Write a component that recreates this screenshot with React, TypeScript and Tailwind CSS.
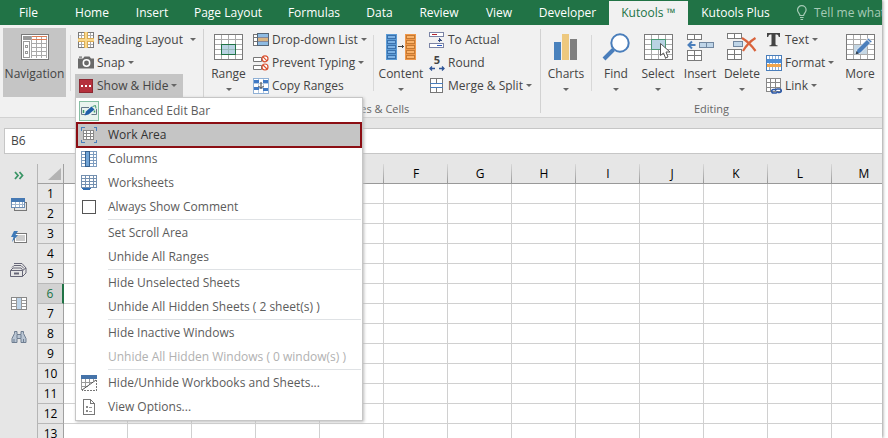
import type { ReactNode } from "react";

const G = "#7a7a7a";
const B = "#4a7ebb";

function Svg({ w, h, children, smooth }: { w: number; h: number; children: ReactNode; smooth?: boolean }) {
  return (
    <svg
      width={w}
      height={h}
      viewBox={`0 0 ${w} ${h}`}
      fill="none"
      shapeRendering={smooth ? "auto" : "crispEdges"}
      className="block shrink-0"
      aria-hidden="true"
    >
      {children}
    </svg>
  );
}

function Arrow() {
  return (
    <svg width="6" height="3" viewBox="0 0 6 3" className="block shrink-0" aria-hidden="true">
      <path d="M0 0h6L3 3z" fill="#666" />
    </svg>
  );
}

/* ---------- large ribbon icons ---------- */

const NavigationIcon = () => (
  <Svg w={28} h={26}>
    <rect x=".5" y=".5" width="27" height="25" fill="#fff" stroke={G} />
    <rect x="2" y="2" width="8" height="4" fill="#999" />
    <path d="M11 9.500h15M11 13.500h15M11 17.500h15M11 21.500h15M10.500 2v22M15.500 2v22M20.500 2v22M25.500 2v22" stroke="#aaa" />
    <path d="M11 2.500h15M11 5.500h15" stroke="#e07b53" />
    <path d="M2.500 7.500h6v16h-6zM4.500 11.500h2v2h-2zM4.500 17.500h2v2h-2z" stroke="#999" />
  </Svg>
);

const SheetBase = () => (
  <>
    <rect x=".5" y=".5" width="28" height="25" fill="#fff" stroke={G} />
    <path d="M1 5.500h27M1 10.500h27M1 15.500h27M1 20.500h27M7.500 1v24M14.500 1v24M21.500 1v24" stroke="#aaa" />
  </>
);

const RangeIcon = () => (
  <Svg w={29} h={26}>
    <SheetBase />
    <rect x="7.500" y="10.500" width="14" height="10" fill="#b9d3e3" stroke="#217346" />
    <path d="M14.500 11v9M8 15.500h13" stroke="#9bb" />
  </Svg>
);

const ContentIcon = () => (
  <Svg w={30} h={26}>
    <rect x="0" y="0" width="11" height="26" fill="#5b9bd5" />
    <rect x="19" y="0" width="11" height="26" fill="#f0984a" />
    {[1, 6, 11, 16, 21].map((y) => (
      <g key={y}>
        <rect x="1.500" y={y + 0.5} width="8" height="3" fill="#7db3e5" stroke="#3a71ad" />
        <rect x="20.500" y={y + 0.5} width="8" height="3" fill="#fbb36a" stroke="#c57a33" />
      </g>
    ))}
    <path d="M12 12.500h6M16.500 11v3" stroke="#444" />
  </Svg>
);

const ChartsIcon = () => (
  <Svg w={24} h={26}>
    <rect x="0" y="8" width="7" height="18" fill="#4a82bd" />
    <rect x="8" y="0" width="7" height="26" fill="#edc87e" />
    <rect x="16" y="5" width="7" height="21" fill="#7f7f7f" />
  </Svg>
);

const FindIcon = () => (
  <Svg w={28} h={28} smooth>
    <path d="M11.500 16.500L2 26" stroke={B} strokeWidth="4" />
    <circle cx="18" cy="10" r="8.700" fill="#fff" stroke={B} strokeWidth="2" />
  </Svg>
);

const SelectIcon = () => (
  <Svg w={29} h={26}>
    <SheetBase />
    <rect x="7.500" y="5.500" width="14" height="10" fill="#b9d3e3" stroke="#4c9a76" />
    <path d="M16.500 9.500v12l3-2.500 2 5 2.500-1-2-5h4z" fill="#fff" stroke="#555" shapeRendering="auto" />
  </Svg>
);

const InsertIcon = () => (
  <Svg w={27} h={27}>
    <path d="M.5.5h14v5H.5zM7.500.5v5M.5 16.500h14v10H.5zM7.500 16.500v10M.5 21.500h14" fill="#fff" stroke={G} />
    <path d="M12.500 8.500h14v5h-14zM19.500 8.500v5" fill="#bfd5e8" stroke="#7187a0" />
    <path d="M1.500 11h7M5 7.500L1.500 11 5 14.500" stroke={B} strokeWidth="2" shapeRendering="auto" />
  </Svg>
);

const DeleteIcon = () => (
  <Svg w={30} h={28}>
    <path d="M.5.5h14v5H.5zM7.500.5v5M.5 16.500h14v10H.5zM7.500 16.500v10M.5 21.500h14" fill="#fff" stroke={G} />
    <path d="M6.500 8.500h9v5h-9z" fill="#bfd5e8" stroke="#7187a0" />
    <path
      d="M15 5c5 3 10 8 13.500 13M28.500 5c-5 3-9 7-12.500 13"
      stroke="#d9633c"
      strokeWidth="2.200"
      shapeRendering="auto"
    />
  </Svg>
);

const MoreIcon = () => (
  <Svg w={29} h={26}>
    <SheetBase />
    <rect x="8" y="11" width="13" height="9" fill="#c5d7e4" />
    <g shapeRendering="auto">
      <path d="M9.500 20.500l1.500-5L22.500 4l3.500 3.500L14.500 19z" fill={B} stroke="#fff" strokeWidth=".7" />
      <path d="M9.500 20.500l1-3.500 2.500 2.500z" fill="#345" />
      <path d="M21 5.500L24.500 9" stroke="#fff" />
    </g>
  </Svg>
);

/* ---------- small ribbon icons ---------- */

const ReadingIcon = () => (
  <Svg w={16} h={16}>
    <rect x=".5" y=".5" width="15" height="15" fill="#fff" stroke={G} />
    <path d="M1 3.500h14M1 12.500h14M3.500 1v14M12.500 1v14" stroke="#aaa" />
    <path d="M6 0h4v6h6v4h-6v6H6v-6H0V6h6z" fill="#f9d88c" />
    <path d="M6.500 0v6.500H0M9.500 0v6.500H16M6.500 16V9.500H0M9.500 16V9.500H16" stroke="#d9ab55" />
  </Svg>
);

const CameraIcon = () => (
  <Svg w={16} h={13} smooth>
    <path d="M0 2.500h5L6.500.5h5L13 2.500h3v10H0z" fill="#6a6a6a" />
    <circle cx="8.500" cy="7" r="3.200" fill="#6a6a6a" stroke="#fff" strokeWidth="1.500" />
    <path d="M1 .5h3v1.200H1z" fill="#6a6a6a" />
  </Svg>
);

const HideIcon = () => (
  <Svg w={16} h={14}>
    <rect x="1.500" y=".5" width="13" height="13" fill="#b5303c" stroke="#8d2731" />
    <path d="M3 6h2v2H3zM7 6h2v2H7zM11 6h2v2h-2z" fill="#fff" />
  </Svg>
);

const DropListIcon = () => (
  <Svg w={16} h={14}>
    <path d="M.5 1.500h4v11h-4zM1 4.500h3M1 8.500h3" fill="#fff" stroke="#777" />
    <rect x="4.500" y=".5" width="11" height="12" fill="#8dbbe3" stroke="#567" />
    <rect x="5" y="4" width="10" height="5" fill="#d8b583" />
    <path d="M5 4.500h10M5 8.500h10" stroke="#889" />
  </Svg>
);

const PreventIcon = () => (
  <Svg w={16} h={16} smooth>
    <path d="M.5 2.500h8v4h-8zM.5 10.500h8v4h-8z" fill="#fff" stroke="#777" />
    <circle cx="12" cy="3.800" r="3" fill="#fff" stroke="#d9502f" strokeWidth="1.200" />
    <circle cx="12" cy="12" r="3" fill="#fff" stroke="#d9502f" strokeWidth="1.200" />
    <path d="M10 1.800l4 4M10 10l4 4" stroke="#d9502f" strokeWidth="1.200" />
  </Svg>
);

const CopyRangesIcon = () => (
  <Svg w={16} h={16}>
    <rect x=".5" y=".5" width="15" height="15" fill="#fff" stroke="#8fb0d5" />
    <path d="M1 5.500h14M1 10.500h14M5.500 1v14M10.500 1v14" stroke="#b5c9e0" />
    <path d="M1 2h5v3H1zM10 2h5v3h-5zM1 9h5v3H1zM10 10h5v3h-5z" fill="#3f79c4" />
    <path d="M8 4v6M5.500 8L8 10.500 10.500 8" stroke="#333" shapeRendering="auto" />
  </Svg>
);

const ActualIcon = () => (
  <Svg w={16} h={16}>
    <rect x=".5" y=".5" width="14" height="4" fill="#fff" stroke="#7a83a5" />
    <path d="M3 2.500h5" stroke="#b3262f" />
    <rect x=".5" y="11.500" width="14" height="4" fill="#fff" stroke="#7a83a5" />
    <path d="M8 13.500h5" stroke="#2b58c0" />
    <path d="M10.500 6v4M8.500 8.500h4M9.500 7.500h2" stroke="#334a80" />
  </Svg>
);

const RoundIcon = () => (
  <span className="flex h-[17px] w-4 shrink-0 flex-col items-center justify-between" aria-hidden="true">
    <span className="text-[11px] leading-[11px] font-bold">5</span>
    <Svg w={16} h={5} smooth>
      <path d="M1 2.500h5M3 .5L1 2.500l2 2M10 2.500h5M13 .5l2 2-2 2" stroke="#2e5597" strokeWidth="1.300" />
    </Svg>
  </span>
);

const MergeIcon = () => (
  <Svg w={16} h={15}>
    <rect x="1.500" y=".5" width="12" height="14" fill="#fff" stroke="#777" />
    <path d="M7.500 1v4M7.500 10v4" stroke="#777" />
    <path d="M1 5.500h13M1 9.500h13" stroke={B} />
  </Svg>
);

const TextIcon = () => (
  <Svg w={16} h={15} smooth>
    <path
      d="M1 1h13v4h-1.200c-.4-2-1-2.500-3.300-2.500V12c0 1 .5 1.200 2 1.200V14.200H3.500V13.200c1.500 0 2-.2 2-1.200V2.500C3.200 2.500 2.600 3 2.200 5H1z"
      fill="#444"
    />
  </Svg>
);

const FormatIcon = () => (
  <Svg w={16} h={16}>
    <rect x=".5" y=".5" width="15" height="15" fill="#fff" stroke="#4a7ebb" />
    <path d="M3.500 1v14M6.500 1v14M9.500 1v14M12.500 1v14" stroke="#8fb0d5" />
    <rect x="1" y="4" width="14" height="4" fill="#4f8fd6" />
    <rect x="1" y="9" width="14" height="3" fill="#f2a64c" />
  </Svg>
);

const LinkIcon = () => (
  <Svg w={16} h={16}>
    <path d="M.5.5h14v13H.5zM.5 4.500h14M.5 9.500h14M4.500.5v13M9.500.5v13" fill="#fff" stroke="#888" />
    <g shapeRendering="auto" strokeWidth="1.500" stroke="#2b58a8" fill="none">
      <path d="M9 11.500H7.500a1.800 1.800 0 0 0 0 3.600H10a1.800 1.800 0 0 0 1.500-1.800" />
      <path d="M12 14.500h1.500a1.800 1.800 0 0 0 0-3.600H11a1.800 1.800 0 0 0-1.500 1.800" />
    </g>
  </Svg>
);

/* ---------- ribbon parts ---------- */

function BigButton({ icon, label, className, arrow = true }: { icon: ReactNode; label: string; className: string; arrow?: boolean }) {
  return (
    <button type="button" className={`flex h-[69px] shrink-0 flex-col items-center gap-1.5 pt-1.5 ${className}`}>
      <span className="flex h-[26px] items-center">{icon}</span>
      <span className="h-4 leading-4 whitespace-nowrap">{label}</span>
      {arrow && <Arrow />}
    </button>
  );
}

function SmallButton({ icon, label, arrow, wide, active }: { icon: ReactNode; label: string; arrow?: boolean; wide?: boolean; active?: boolean }) {
  return (
    <button
      type="button"
      className={`flex h-[23px] items-center gap-[3px] self-start px-[3px] whitespace-nowrap ${active ? "bg-[#c5c5c5] pr-1.5" : ""}`}
    >
      {icon}
      <span className={wide ? "pr-1" : ""}>{label}</span>
      {arrow && <Arrow />}
    </button>
  );
}

const ShortRule = () => <span className="mt-[7px] h-14 w-px shrink-0 bg-[#d8d8d8]" />;
const LongRule = () => <span className="mt-1 h-[84px] w-px shrink-0 bg-[#d2d2d2]" />;

function Group({ label, className, children }: { label?: string; className: string; children: ReactNode }) {
  return (
    <section className={`flex shrink-0 flex-col pt-[3px] ${className}`}>
      <div className="flex">{children}</div>
      {label && <p className="pt-1 text-center text-[11px] leading-4 text-[#666]">{label}</p>}
    </section>
  );
}

const tabs = [
  ["File", "w-[61px] pr-1"],
  ["Home", "w-[62px]"],
  ["Insert", "w-[58px]"],
  ["Page Layout", "w-[94px]"],
  ["Formulas", "w-[78px]"],
  ["Data", "w-[53px]"],
  ["Review", "w-[66px]"],
  ["View", "w-[54px]"],
  ["Developer", "w-[83px]"],
  ["Kutools ™", "w-[79px] mt-px bg-[#f1f1f1] text-[#217346]"],
  ["Kutools Plus", "w-[95px]"],
];

/* ---------- menu ---------- */

const EditBarIcon = () => (
  <Svg w={20} h={20} smooth>
    <rect x=".5" y=".5" width="19" height="19" fill="#e9f3ee" stroke="#86bfa3" />
    <path d="M10 6.500H2.500v7h4M17.500 8v5.500h-5" stroke="#678" />
    <path d="M4.500 9v3M15.500 9.500v2" stroke="#3d9a6c" strokeWidth="1.500" />
    <path d="M5.500 14.500l1.500-4 5.500-5 3 3-6 5z" fill="#1f5fa8" />
    <path d="M13.500 5.500l3-1 .5 3" stroke="#3d9a6c" />
  </Svg>
);

const WorkAreaIcon = () => (
  <Svg w={16} h={16}>
    <path d="M3.500.5h-3v3M12.500.5h3v3M3.500 15.500h-3v-3M12.500 15.500h3v-3" stroke={B} />
    <path d="M2.500 3.500h10v9h-10zM2.500 6.500h10M2.500 9.500h10M5.500 3.500v9M9.500 3.500v9" fill="#fff" stroke="#888" />
  </Svg>
);

const ColumnsIcon = () => (
  <Svg w={16} h={16}>
    <path d="M.5.5h15v15H.5zM.5 3.500h15M.5 6.500h15M.5 9.500h15M.5 12.500h15M12.500.5v15" fill="#fff" stroke="#7d9cbf" />
    <rect x="4.500" y=".5" width="4" height="15" fill="#6fa3d6" stroke="#37618f" />
  </Svg>
);

const WorksheetsIcon = () => (
  <Svg w={16} h={16}>
    <path d="M.5.5h15v12H.5zM.5 3.500h15M.5 6.500h15M.5 9.500h15M4.500.5v12M8.500.5v12M12.500.5v12" fill="#fff" stroke="#7490b0" />
    <path d="M1 13h9l-1.500 2H2.500z" fill="#2f6db3" />
  </Svg>
);

const HideBooksIcon = () => (
  <Svg w={16} h={16}>
    <path d="M.5 3.500h15M.5 3v12M.5 7.500h11M.5 11.500h6M4.500 3v9M8.500 3v6M12.500 3v3" stroke="#999" />
    <path d="M15.500 5v10.500H.5" stroke="#777" strokeDasharray="2 1" />
    <rect x="0" y="0" width="16" height="4" fill="#4573a9" />
    <path d="M1 15L15 5" stroke="#555" shapeRendering="auto" />
  </Svg>
);

const ViewOptionsIcon = () => (
  <Svg w={16} h={16}>
    <path d="M2.500.5h7l4 4v11h-11zM9.500.5v4h4" fill="#fff" stroke="#777" />
    <path d="M5 7h2v2H5zM5 11h2v2H5z" fill="#888" />
    <path d="M8 8.500h3M8 12.500h3" stroke="#999" />
  </Svg>
);

type Entry = { label: string; icon?: ReactNode; state?: "active" | "off" | "check" };

const menu: Entry[][] = [
  [
    { label: "Enhanced Edit Bar", icon: <EditBarIcon /> },
    { label: "Work Area", icon: <WorkAreaIcon />, state: "active" },
    { label: "Columns", icon: <ColumnsIcon /> },
    { label: "Worksheets", icon: <WorksheetsIcon /> },
    { label: "Always Show Comment", state: "check" },
  ],
  [{ label: "Set Scroll Area" }, { label: "Unhide All Ranges" }],
  [{ label: "Hide Unselected Sheets" }, { label: "Unhide All Hidden Sheets ( 2 sheet(s) )" }],
  [{ label: "Hide Inactive Windows" }, { label: "Unhide All Hidden Windows ( 0 window(s) )", state: "off" }],
  [
    { label: "Hide/Unhide Workbooks and Sheets...", icon: <HideBooksIcon /> },
    { label: "View Options...", icon: <ViewOptionsIcon /> },
  ],
];

function MenuRow({ label, icon, state }: Entry) {
  if (state === "check") {
    return (
      <label className="flex h-6 items-center">
        <span className="flex w-[31px] shrink-0 pl-[5px]">
          <input type="checkbox" className="size-3.5 appearance-none border border-[#555] bg-white" />
        </span>
        {label}
      </label>
    );
  }
  const tone =
    state === "active"
      ? "bg-[#c5c5c5] text-[#333] outline-2 -outline-offset-1 outline-[#8c0e14]"
      : state === "off"
        ? "text-[#b1b1b1]"
        : "";
  return (
    <button type="button" disabled={state === "off"} className={`flex h-6 w-full items-center text-left whitespace-nowrap ${tone}`}>
      <span className="flex w-6 shrink-0 justify-center">{icon}</span>
      <span className="pl-[7px]">{label}</span>
    </button>
  );
}

function ShowHideMenu() {
  return (
    <div className="absolute top-[23px] left-0 z-10 w-72 border border-[#c6c6c6] bg-white p-px text-[#5c5c5c] shadow-[1px_1px_3px_#bbb]">
      {menu.map((section, i) => (
        <div key={section[0].label}>
          {i > 0 && <hr className="mb-px ml-[31px] border-[#dfe2e5]" />}
          {section.map((entry) => (
            <MenuRow key={entry.label} {...entry} />
          ))}
        </div>
      ))}
    </div>
  );
}

/* ---------- side bar ---------- */

const sideIcons: [string, ReactNode][] = [
  [
    "Workbooks and sheets",
    <Svg w={16} h={13}>
      <path d="M3.500 10v2.500h12V4.500H13" stroke="#777" />
      <rect x=".5" y=".5" width="13" height="9" fill="#fff" stroke="#6b8db5" />
      <path d="M1 6.500h12M4.500 3v6M8.500 3v6M11.500 3v6" stroke="#9fb4cc" />
      <rect x="0" y="0" width="14" height="4" fill="#4679b3" />
    </Svg>,
  ],
  [
    "AutoText",
    <Svg w={18} h={13} smooth>
      <rect x="4.500" y="2.500" width="12" height="9" fill="#fff" stroke="#777" />
      <rect x="6" y="4" width="9" height="6" fill="#ccc" />
      <path d="M4 0h4L5.500 4H8l-6 7 1.500-5H1z" fill="#3f7ab8" />
    </Svg>,
  ],
  [
    "Name manager",
    <Svg w={17} h={15} smooth>
      <path
        d="M4 .5h8l4 4.500M2 4.500L4 2.500h7l3 3M.5 7.500L3 5h8l2 2.500M.5 7.500h12v6H.5zM12.500 13.500L16 10V5M12.500 7.500L16 5"
        stroke="#667"
      />
      <path d="M4 10.500h5" stroke="#667" strokeWidth="2" />
    </Svg>,
  ],
  [
    "Column list",
    <Svg w={16} h={13}>
      <rect x=".5" y=".5" width="15" height="12" fill="#fff" stroke="#888" />
      <rect x="6" y="1" width="4" height="11" fill="#bcd3e8" />
      <path d="M1 3.500h4M1 6.500h4M1 9.500h4M11 3.500h4M11 6.500h4M11 9.500h4M5.500 1v11M10.500 1v11" stroke="#999" />
    </Svg>,
  ],
  [
    "Advanced find and replace",
    <Svg w={16} h={14} smooth>
      <path d="M3.500 1.500h2.500v3h4v-3h2.500v2l2.500 5v4h-5v-4h-4v4H1v-4l2.500-5z" fill="#bac6d4" stroke="#6f7e91" />
      <path d="M3 9v3M12.500 9v3M6 5v3M10 5v3" stroke="#6f7e91" />
    </Svg>,
  ],
];

const columns = ["A", "B", "C", "D", "E", "F", "G", "H", "I", "J", "K", "L", "M"];
const rows = [1, 2, 3, 4, 5, 6, 7, 8, 9, 10, 11, 12, 13];

export default function App() {
  return (
    <div className="h-screen overflow-hidden bg-white pr-[6px] font-['Open_Sans','Noto_Sans',sans-serif] text-xs text-[#444]">
      <div className="flex h-full flex-col overflow-hidden bg-[#e6e6e6] shadow-[1px_0_3px_#999]">
        <nav className="flex h-[25px] shrink-0 overflow-hidden bg-[#217346] text-white">
          {tabs.map(([name, style]) => (
            <button key={name} type="button" className={`shrink-0 whitespace-nowrap ${style}`}>
              {name}
            </button>
          ))}
          <button type="button" className="flex shrink-0 items-center gap-1.5 pl-[13px] whitespace-nowrap text-[#a6cbb6]">
            <Svg w={12} h={16} smooth>
              <path
                d="M4 10.500C4 8.500 1.500 7.500 1.500 5a4.300 4.300 0 0 1 8.600 0c0 2.500-2.500 3.500-2.500 5.500zM4 12.500h3.600M4.500 14.500h2.600"
                stroke="#a6cbb6"
                strokeWidth="1.200"
              />
            </Svg>
            Tell me what
          </button>
        </nav>

        <div className="flex h-[93px] shrink-0 border-b border-[#d2d2d2] bg-[#f1f1f1]">
          <Group className="w-[203px]">
            <BigButton icon={<NavigationIcon />} label="Navigation" className="mr-1 ml-[3px] w-[63px] bg-[#c5c5c5]" arrow={false} />
            <ShortRule />
            <div className="ml-1 flex flex-col">
              <SmallButton icon={<ReadingIcon />} label="Reading Layout" arrow wide />
              <SmallButton icon={<CameraIcon />} label="Snap" arrow />
              <div className="relative">
                <SmallButton icon={<HideIcon />} label="Show & Hide" arrow active />
                <ShowHideMenu />
              </div>
            </div>
          </Group>
          <LongRule />
          <Group label="Ranges & Cells" className="w-[336px]">
            <BigButton icon={<RangeIcon />} label="Range" className="ml-[3px] w-[43px]" />
            <div className="flex w-[123px] flex-col">
              <SmallButton icon={<DropListIcon />} label="Drop-down List" arrow />
              <SmallButton icon={<PreventIcon />} label="Prevent Typing" arrow />
              <SmallButton icon={<CopyRangesIcon />} label="Copy Ranges" />
            </div>
            <ShortRule />
            <BigButton icon={<ContentIcon />} label="Content" className="ml-0.5 w-[50px]" />
            <div className="flex flex-col">
              <SmallButton icon={<ActualIcon />} label="To Actual" />
              <SmallButton icon={<RoundIcon />} label="Round" />
              <SmallButton icon={<MergeIcon />} label="Merge & Split" arrow />
            </div>
          </Group>
          <LongRule />
          <Group label="Editing" className="w-[341px]">
            <BigButton icon={<ChartsIcon />} label="Charts" className="mx-[3px] w-11" />
            <ShortRule />
            <BigButton icon={<FindIcon />} label="Find" className="ml-[3px] w-[42px]" />
            <BigButton icon={<SelectIcon />} label="Select" className="w-[42px]" />
            <BigButton icon={<InsertIcon />} label="Insert" className="w-[42px]" />
            <BigButton icon={<DeleteIcon />} label="Delete" className="w-[42px]" />
            <div className="flex w-[76px] flex-col">
              <SmallButton icon={<TextIcon />} label="Text" arrow />
              <SmallButton icon={<FormatIcon />} label="Format" arrow />
              <SmallButton icon={<LinkIcon />} label="Link" arrow />
            </div>
            <BigButton icon={<MoreIcon />} label="More" className="w-[42px]" />
          </Group>
        </div>

        <div className="my-2.5 flex h-[26px] shrink-0 gap-2 pl-1">
          <input
            aria-label="Name box"
            defaultValue="B6"
            className="w-[104px] border border-[#c6c6c6] bg-white px-1.5 outline-none"
          />
          <input aria-label="Formula bar" className="min-w-0 flex-1 border border-r-0 border-[#c6c6c6] bg-white px-2 outline-none" />
        </div>

        <main className="flex min-h-0 flex-1">
          <aside className="flex w-[37px] shrink-0 flex-col items-center">
            <button type="button" aria-label="Expand pane" className="mb-0.5 flex h-[22px] w-full items-center justify-center">
              <Svg w={10} h={9} smooth>
                <path d="M1 1l3 3.500L1 8M5.500 1l3 3.500-3 3.500" stroke="#3a9566" strokeWidth="1.800" />
              </Svg>
            </button>
            {sideIcons.map(([name, icon]) => (
              <button key={name} type="button" aria-label={name} className="flex h-[33px] w-full items-center justify-center">
                {icon}
              </button>
            ))}
          </aside>
          <div className="min-w-0 flex-1 overflow-hidden">
            <table className="w-[859px] table-fixed border-separate border-spacing-0 bg-white text-black">
              <thead>
                <tr className="h-5 bg-[#e6e6e6]">
                  <th className="w-[27px] border-x border-b border-[#a0a0a0] border-l-[#b5b5b5] p-0" aria-label="Select all">
                    <svg width="13" height="12" viewBox="0 0 13 12" className="mr-0.5 ml-auto block" aria-hidden="true">
                      <path d="M13 0v12H0z" fill="#b3b3b3" />
                    </svg>
                  </th>
                  {columns.map((c) => (
                    <th
                      key={c}
                      scope="col"
                      className="h-5 w-16 border-b border-[#999] bg-[linear-gradient(#d8d8d8,#999)] bg-[length:1px_100%] bg-right bg-no-repeat p-0 font-normal"
                    >
                      {c}
                    </th>
                  ))}
                </tr>
              </thead>
              <tbody>
                {rows.map((r) => (
                  <tr key={r}>
                    <th
                      scope="row"
                      className={`h-5 border-x border-b border-[#a0a0a0] border-b-[#b8b8b8] border-l-[#b5b5b5] p-0 font-normal ${
                        r === 6 ? "border-r-2 border-r-[#217346] bg-[#d2d2d2] text-[#217346]" : "bg-[#e6e6e6]"
                      }`}
                    >
                      {r}
                    </th>
                    {columns.map((c) => (
                      <td key={c} className="border-r border-b border-[#d0d0d0] p-0" />
                    ))}
                  </tr>
                ))}
              </tbody>
            </table>
          </div>
        </main>
      </div>
    </div>
  );
}
